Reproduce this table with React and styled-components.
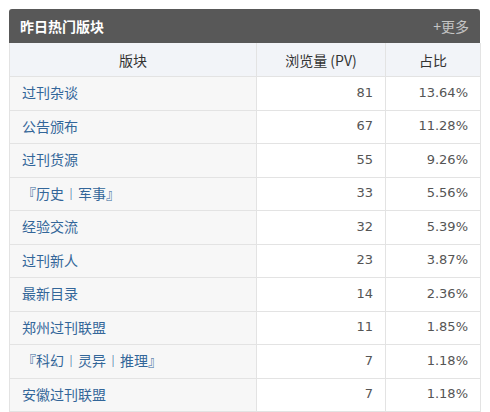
import styled, { createGlobalStyle } from 'styled-components'

const GlobalStyle = createGlobalStyle`
  body {
    margin: 0;
    background: #fff;
    font-family: "Microsoft YaHei", "Noto Sans CJK SC", "Liberation Sans", sans-serif;
  }
`

const Panel = styled.div`
  width: 471px;
  margin: 9px 0 0 9px;
`

const TitleBar = styled.div`
  height: 34px;
  background: #585858;
  border-radius: 3px 3px 0 0;
  display: flex;
  align-items: center;
  justify-content: space-between;
  padding: 0 11px 0 11px;
  box-sizing: border-box;
`

const Title = styled.h3`
  margin: 0;
  color: #fff;
  font-size: 14px;
  font-weight: bold;
`

const More = styled.a`
  color: #c4c4c4;
  font-size: 14px;
  text-decoration: none;
`

const Table = styled.table`
  width: 100%;
  border-collapse: collapse;
  table-layout: fixed;
  font-size: 14px;
`

const Th = styled.th`
  height: 33px;
  padding: 0;
  background: #f2f4f8;
  border: 1px solid #e3e3e3;
  border-top: none;
  color: #333;
  font-weight: normal;
  text-align: center;
`

const Row = styled.tr`
  height: 33.5px;
`

const Cell = styled.td`
  padding: 0 12px 2px;
  border: 1px solid #e3e3e3;
  background: ${p => (p.$name ? '#f7f7f7' : '#fff')};
  color: ${p => (p.$name ? '#336699' : '#555')};
  text-align: ${p => (p.$name ? 'left' : 'right')};
  font-family: ${p => (p.$name ? 'inherit' : '"DejaVu Sans", Verdana, sans-serif')};
  font-size: ${p => (p.$name ? '14px' : '13px')};
  white-space: nowrap;
`

const rows = [
  ['过刊杂谈', 81, '13.64%'],
  ['公告颁布', 67, '11.28%'],
  ['过刊货源', 55, '9.26%'],
  ['『历史︱军事』', 33, '5.56%'],
  ['经验交流', 32, '5.39%'],
  ['过刊新人', 23, '3.87%'],
  ['最新目录', 14, '2.36%'],
  ['郑州过刊联盟', 11, '1.85%'],
  ['『科幻︱灵异︱推理』', 7, '1.18%'],
  ['安徽过刊联盟', 7, '1.18%'],
]

export default function App() {
  return (
    <Panel>
      <GlobalStyle />
      <TitleBar>
        <Title>昨日热门版块</Title>
        <More href="#">+更多</More>
      </TitleBar>
      <Table>
        <colgroup>
          <col style={{ width: 247 }} />
          <col style={{ width: 129 }} />
          <col style={{ width: 95 }} />
        </colgroup>
        <thead>
          <tr>
            <Th>版块</Th>
            <Th>浏览量 (PV)</Th>
            <Th>占比</Th>
          </tr>
        </thead>
        <tbody>
          {rows.map(([name, pv, pct]) => (
            <Row key={name}>
              <Cell $name>{name}</Cell>
              <Cell>{pv}</Cell>
              <Cell>{pct}</Cell>
            </Row>
          ))}
        </tbody>
      </Table>
    </Panel>
  )
}
